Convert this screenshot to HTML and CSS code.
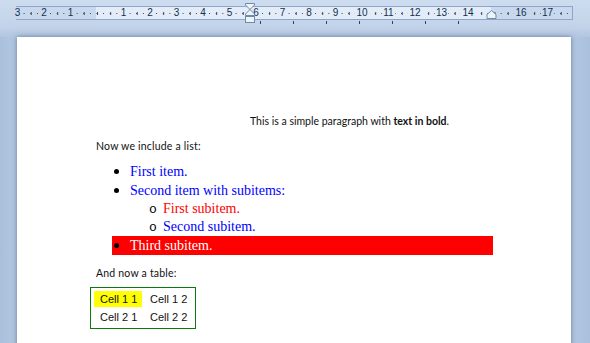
FILE: index.html
```html
<!DOCTYPE html>
<html lang="en">
<head>
  <meta charset="UTF-8">
  <title>Document</title>
  <link rel="stylesheet" href="styles.css">
</head>
<body>
  <div class="top-bar">
    <div class="ruler">
      <span class="cm first"><span class="num g">3</span></span>
      <span class="cm"><span class="num g">2</span></span>
      <span class="cm"><span class="num g">1</span></span>
      <span class="cm"></span>
      <span class="cm"><span class="num">1</span></span>
      <span class="cm"><span class="num">2</span></span>
      <span class="cm"><span class="num">3</span></span>
      <span class="cm"><span class="num">4</span></span>
      <span class="cm"><span class="num">5</span></span>
      <span class="cm"><span class="num">6</span></span>
      <span class="cm"><span class="num">7</span></span>
      <span class="cm"><span class="num">8</span></span>
      <span class="cm"><span class="num">9</span></span>
      <span class="cm"><span class="num">10</span></span>
      <span class="cm"><span class="num">11</span></span>
      <span class="cm"><span class="num">12</span></span>
      <span class="cm"><span class="num">13</span></span>
      <span class="cm"><span class="num">14</span></span>
      <span class="cm"></span>
      <span class="cm"><span class="num g">16</span></span>
      <span class="cm"><span class="num g">17</span></span>

      <!-- indent markers -->
      <svg class="indent-left" width="12" height="21" viewBox="0 0 12 21">
        <path d="M1.5 0.5 H10.5 V2 L6 6.5 L1.5 2 Z" fill="#eef3fa" stroke="#6f89ab"/>
        <path d="M6 6.5 L10.5 11 V12.5 H1.5 V11 Z" fill="#eef3fa" stroke="#6f89ab"/>
        <rect x="1.5" y="13.5" width="9" height="6" fill="#eef3fa" stroke="#6f89ab"/>
      </svg>
      <svg class="indent-right" width="11" height="10" viewBox="0 0 11 10">
        <path d="M1 4.5 L5.5 0.5 L10 4.5 V8.5 H1 Z" fill="#eef3fa" stroke="#6f89ab"/>
      </svg>
    </div>
    <div class="tabs"></div>
  </div>

  <div class="page">
    <p class="intro">This is a simple paragraph with <b>text in bold</b>.</p>
    <p class="text lead">Now we include a list:</p>

    <ul class="list">
      <li class="item blue"><span class="dot"></span>First item.</li>
      <li class="item blue"><span class="dot"></span>Second item with subitems:</li>
      <li class="sub">
        <ul class="sublist">
          <li class="item red"><span class="ring">o</span>First subitem.</li>
          <li class="item blue"><span class="ring">o</span>Second subitem.</li>
        </ul>
      </li>
      <li class="item marked"><span class="dot"></span>Third subitem.</li>
    </ul>

    <p class="text table-label">And now a table:</p>

    <div class="table">
      <span class="cell yellow">Cell 1 1</span>
      <span class="cell">Cell 1 2</span>
      <span class="cell">Cell 2 1</span>
      <span class="cell">Cell 2 2</span>
    </div>
  </div>
</body>
</html>
```

FILE: styles.css
```css
html, body {
  margin: 0;
  height: 100%;
  overflow: hidden;
}
body {
  background: linear-gradient(to right, #a9bfdc, #b4c8e2 3%, #b4c8e2 97%, #a9bfdc);
  font-family: Lato, "Open Sans", sans-serif;
}

/* ruler strip */
.top-bar {
  height: 37px;
  padding-top: 6px;
  box-sizing: border-box;
  background: linear-gradient(#cddcef, #c3d4ea 70%, #b3c6e0);
}
.ruler {
  position: relative;
  display: flex;
  margin-left: 16px;
  width: 557px;
  height: 14px;
  box-sizing: border-box;
  border: 1px solid #8ea7c8;
  background:
    linear-gradient(to right, #2d4363 1px, transparent 1px) 0 5.5px / 6.625px 1px repeat-x,
    linear-gradient(to right, #2d4363 1px, transparent 1px) 0.5px 4.5px / 13.25px 3px repeat-x,
    linear-gradient(to right, #c9d8ec 79px, #e4ecf7 79px, #e4ecf7 474px, #c9d8ec 474px);
  color: #14304f;
  font: 10px/12px "Liberation Sans", Arial, sans-serif;
}
.cm {
  flex: 0 0 26.5px;
  display: flex;
  justify-content: center;
}
.cm.first {
  margin-left: -12.75px;
}
.num {
  background: #e4ecf7;
  padding: 0 1px;
}
.num.g {
  background: #c9d8ec;
}
.indent-left {
  position: absolute;
  left: 227px;
  top: -4px;
}
.indent-right {
  position: absolute;
  left: 469px;
  top: 3px;
}
.tabs {
  margin: 1px 0 0 260px;
  width: 200px;
  height: 3px;
  background: linear-gradient(to right, #2d4363 1px, transparent 1px) 0 0 / 33px 3px repeat-x;
}

/* page */
.page {
  margin-left: 17px;
  width: 554px;
  height: 400px;
  box-sizing: border-box;
  padding: 76px 0 0 79px;
  background: #fff;
  box-shadow: 0 0 5px rgba(40, 60, 90, 0.55);
}
.intro, .text {
  margin: 0;
  font-size: 10.5px;
  line-height: 16px;
  color: #111;
}
.text {
  letter-spacing: 0.2px;
}
.intro {
  padding-left: 154px;
}
.lead {
  margin-top: 9px;
}

.list, .sublist {
  list-style: none;
  margin: 0;
  padding: 0;
  font-family: "Liberation Serif", "Times New Roman", serif;
  font-size: 14px;
}
.list {
  margin-top: 8px;
  padding-left: 16px;
}
.item {
  display: flex;
  align-items: center;
  height: 19px;
}
.sublist .item {
  height: 18px;
  padding-left: 37px;
}
.dot {
  width: 5px;
  height: 5px;
  margin: 0 11px 0 2px;
  border-radius: 50%;
  background: #000;
}
.ring {
  width: 14px;
  color: #000;
  font: 13px "Liberation Mono", monospace;
}
.blue {
  color: #0000ff;
}
.red {
  color: #ff0000;
}
.marked {
  width: 381px;
  background: #ff0000;
  color: #fff;
}

.table-label {
  margin-top: 10px;
}
.table {
  display: inline-grid;
  grid-template-columns: 48px 48px;
  gap: 2px;
  margin: 6px 0 0 -6px;
  padding: 3px;
  border: 1px solid #0a7a0a;
  font: 11px/16px "Liberation Sans", Arial, sans-serif;
  color: #111;
}
.cell {
  padding-left: 6px;
}
.yellow {
  background: #ffff00;
}
```
